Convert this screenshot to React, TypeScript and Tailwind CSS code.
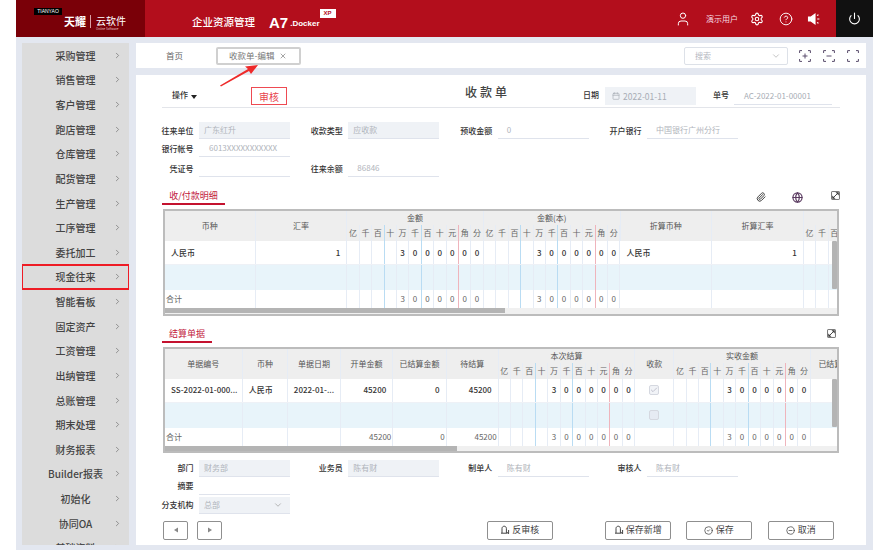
import React from "react";
import { ChevronRight, ChevronDown, User, Settings, CircleHelp, Power, Paperclip, Globe, CircleCheck, CircleMinus, Calendar, X, Check } from "lucide-react";

const MENU = ["采购管理","销售管理","客户管理","跑店管理","仓库管理","配货管理","生产管理","工序管理","委托加工","现金往来","智能看板","固定资产","工资管理","出纳管理","总账管理","期末处理","财务报表","Builder报表","初始化","协同OA","基础资料"];
const DIG = ["亿","千","百","十","万","千","百","十","元","角","分"];
const ROW = ["","","","","3","0","0","0","0","0","0"];
const EMPTY = ["","","","","","","","","","",""];

function sepClass(i: number) {
  if (i === 2 || i === 5) return "border-r-[1.5px] border-r-[#b9dcf3]";
  if (i === 8) return "border-r-[1.5px] border-r-[#efb4bc]";
  return "border-r border-r-[#e6ecf5]";
}

function Digits({ vals, light }: { vals: string[]; light?: boolean }) {
  return (
    <div className="flex h-full">
      {vals.map((v, i) => (
        <div key={i} className={`w-[12.42px] shrink-0 h-full flex items-center justify-center text-[8px] ${light ? "text-[#666]" : "font-medium text-[#333]"} ${sepClass(i)}`}>{v}</div>
      ))}
    </div>
  );
}

function DigitHead({ label }: { label: string }) {
  return (
    <div className="w-[136.62px] shrink-0 h-full flex flex-col border-r border-r-[#e6ecf5]">
      <div className="h-[14px] flex items-center justify-center text-[8px] text-[#555]">{label}</div>
      <div className="h-[16px] flex">
        {DIG.map((d, i) => (
          <div key={i} className={`w-[12.42px] shrink-0 h-full flex items-center justify-center text-[8px] text-[#666] ${sepClass(i)}`}>{d}</div>
        ))}
      </div>
    </div>
  );
}

type Col = { k: "t" | "d"; w: string; head: string; a?: string; r1?: string; r3?: string; check?: boolean };

function Cell({ col, v, light, row }: { col: Col; v?: string; light?: boolean; row: number }) {
  if (col.k === "d") {
    return <div className="w-[136.62px] shrink-0 h-full"><Digits vals={v === "" ? EMPTY : ROW} light={light} /></div>;
  }
  return (
    <div className={`${col.w} shrink-0 h-full flex items-center border-r border-r-[#e6ecf5] text-[8px] ${col.a === "r" ? "justify-end" : col.a === "c" ? "justify-center" : "justify-start"} ${light ? "text-[#666] px-[1px]" : "font-medium text-[#333] px-[6px]"}`}>
      {col.check && row === 0 && <span className="w-[10px] h-[10px] rounded-[2px] border border-[#d5d8e0] bg-[#f1f3f7] flex items-center justify-center"><Check size={8} className="text-[#aab]" /></span>}
      {col.check && row === 1 && <span className="w-[10px] h-[10px] rounded-[2px] border border-[#d5d8e0] bg-[#e6ebf3]" />}
      {!col.check && <span className="whitespace-nowrap">{v}</span>}
    </div>
  );
}

function Table({ cols, thumb, bar }: { cols: Col[]; thumb: string; bar: string }) {
  return (
    <div className="relative mx-[1px] w-[676px] border-2 border-[#bcbcbc] bg-[#f0f0f0] overflow-hidden">
      <div className="overflow-hidden">
        <div className="flex h-[30px] bg-[#eeeeee] w-[900px]">
          {cols.map((c, i) => c.k === "d"
            ? <DigitHead key={i} label={c.head} />
            : <div key={i} className={`${c.w} shrink-0 h-full flex items-center justify-center border-r border-r-[#e6ecf5] text-[8px] text-[#555] whitespace-nowrap overflow-hidden`}>{c.head}</div>)}
        </div>
        <div className="flex h-[24px] bg-white w-[900px] border-b border-b-[#eef1f6]">
          {cols.map((c, i) => <Cell key={i} col={c} v={c.k === "d" ? "x" : c.r1} row={0} />)}
        </div>
        <div className="flex h-[25px] bg-[#e8f4fa] w-[900px]">
          {cols.map((c, i) => <Cell key={i} col={c} v={""} row={1} />)}
        </div>
        <div className="flex h-[18px] bg-white w-[900px]">
          {cols.map((c, i) => <Cell key={i} col={c} v={c.k === "d" ? "x" : c.r3} light row={2} />)}
        </div>
      </div>
      <div className={`${bar} bg-[#f0f0f0]`}><div className={`h-[5px] bg-[#b4b4b4] ${thumb}`} /></div>
      <div className="absolute right-0 top-[30px] w-[5px] h-[48px] bg-[#b4b4b4] rounded-[1px]" />
    </div>
  );
}

const T1: Col[] = [
  { k: "t", w: "w-[90.7px]", head: "币种", r1: "人民币", r3: "合计" },
  { k: "t", w: "w-[91.6px]", head: "汇率", r1: "1", a: "r" },
  { k: "d", w: "", head: "金额" },
  { k: "d", w: "", head: "金额(本)" },
  { k: "t", w: "w-[91.7px]", head: "折算币种", r1: "人民币" },
  { k: "t", w: "w-[91.6px]", head: "折算汇率", r1: "1", a: "r" },
  { k: "d", w: "", head: "" },
];
const T2: Col[] = [
  { k: "t", w: "w-[77.7px]", head: "单据编号", r1: "SS-2022-01-000...", r3: "合计" },
  { k: "t", w: "w-[45.6px]", head: "币种", r1: "人民币" },
  { k: "t", w: "w-[52.4px]", head: "单据日期", r1: "2022-01-...", a: "c" },
  { k: "t", w: "w-[52.6px]", head: "开单金额", r1: "45200", r3: "45200", a: "r" },
  { k: "t", w: "w-[53.4px]", head: "已结算金额", r1: "0", r3: "0", a: "r" },
  { k: "t", w: "w-[52px]", head: "待结算", r1: "45200", r3: "45200", a: "r" },
  { k: "d", w: "", head: "本次结算" },
  { k: "t", w: "w-[39px]", head: "收款", check: true, a: "c" },
  { k: "d", w: "", head: "实收金额" },
  { k: "t", w: "w-[56px]", head: "已结算金额" },
];

function Field({ label, value, filled, chevron, pad }: { label: string; value?: string; filled?: boolean; chevron?: boolean; pad?: string }) {
  return (
    <div className="w-[149.33px] shrink-0 flex items-center">
      <div className="w-[49.5px] text-right text-[8px] font-medium text-[#333] whitespace-nowrap">{label}</div>
      <div className={`ml-[5.5px] w-[91px] h-[17px] flex items-center justify-between pr-[5px] border-b border-b-[#dfe3ec] text-[8px] text-[#b0b4bb] ${filled ? "bg-[#eff2f6] pl-[5px]" : pad ?? "pl-[9px]"}`}>
        <span className="whitespace-nowrap">{value}</span>
        {chevron && <ChevronDown size={10} className="text-[#aaa] mr-[2px]" />}
      </div>
    </div>
  );
}

function ExpandIcon() {
  return (
    <svg width="9" height="9" viewBox="0 0 10 10">
      <rect x="0.6" y="0.6" width="8.8" height="8.8" rx="0.6" fill="none" stroke="#666" strokeWidth="1" />
      <path d="M5 1.4H8.6V5ZM5 8.6H1.4V5Z" fill="#333" />
      <path d="M3 7L7 3" stroke="#333" strokeWidth="1" />
    </svg>
  );
}

function Corners({ mid }: { mid: "plus" | "minus" | "none" }) {
  return (
    <svg width="12" height="12" viewBox="0 0 12 12" fill="none" stroke="#5a4d6c" strokeWidth="1">
      <path d="M0.6 3V0.6H3M9 0.6H11.4V3M11.4 9V11.4H9M3 11.4H0.6V9" />
      {mid !== "none" && <path d="M3.5 6H8.5" />}
      {mid === "plus" && <path d="M6 3.5V8.5" />}
    </svg>
  );
}

function Btn({ children, w }: { children: React.ReactNode; w: string }) {
  return <button className={`${w} h-[19px] shrink-0 flex items-center justify-center gap-[2px] rounded-[2px] border border-[#8f8f8f] bg-white text-[9px] text-[#444]`}>{children}</button>;
}

function NoteIcon() {
  return (
    <svg width="10" height="10" viewBox="0 0 10 10" fill="none" stroke="#444" strokeWidth="1">
      <path d="M1 8.2H7.5M2 8V3.4C2 2.2 3 1.2 4.2 1.2C5.4 1.2 6.4 2.2 6.4 3.4V8M8.6 5V8.8M7.4 7.2L8.6 8.8" />
    </svg>
  );
}

function SpeakerIcon() {
  return (
    <svg width="14" height="14" viewBox="0 0 14 14" fill="none" stroke="white" strokeWidth="1.1">
      <path d="M1.5 5H4L8 2V12L4 9H1.5Z" fill="white" />
      <path d="M10 3.5L11.5 2.8M10.2 7H12.4M10 10.5L11.5 11.2" />
    </svg>
  );
}

export default function App() {
  return (
    <div className="relative w-[890px] h-[550px] bg-white overflow-hidden pl-[16px] pr-[17px] [font-family:'Noto_Sans_CJK_SC','Noto_Sans',sans-serif]">
      <div className="h-full bg-[#e3e7f0] flex flex-col">
        {/* Header */}
        <header className="h-[37px] shrink-0 flex bg-[#b30e1c] text-white">
          <div className="w-[129px] shrink-0 bg-[#7a0008] pl-[18px] pt-[8px]">
            <div className="w-[28px] h-[7px] bg-black text-[5px] leading-[7px] text-center text-white [font-family:'Liberation_Sans',sans-serif]">TIANYAO</div>
            <div className="flex items-start ml-[30px] leading-none">
              <span className="text-[11px] font-bold leading-[13px]">天耀</span>
              <span className="w-px h-[13px] bg-[#d9a0a5] ml-[4px] mr-[5px]" />
              <span className="flex flex-col items-start">
                <span className="text-[10px] leading-[12px]">云软件</span>
                <span className="text-[3px] leading-[4px] text-[#e8c8c8]">Online Software</span>
              </span>
            </div>
          </div>
          <div className="flex items-center pl-[47px] pt-[7px]">
            <span className="text-[10.5px] font-medium whitespace-nowrap">企业资源管理</span>
            <span className="ml-[14px] text-[15px] font-bold leading-none [font-family:'Liberation_Sans',sans-serif]">A7</span>
            <span className="ml-[2px] mt-[4px] text-[8px] font-bold leading-none [font-family:'Liberation_Sans',sans-serif]">.Docker</span>
            <span className="-mt-[17px] w-[16px] h-[9px] bg-white text-[#b30e1c] text-[6px] font-bold leading-[9px] text-center [font-family:'Liberation_Sans',sans-serif]">XP</span>
          </div>
          <div className="ml-auto flex items-center">
            <User size={16} strokeWidth={1.5} />
            <span className="ml-[15px] text-[8px] text-[#f6dce0] whitespace-nowrap">演示用户</span>
            <Settings size={14} strokeWidth={1.9} className="ml-[12px]" />
            <CircleHelp size={14} strokeWidth={1.6} className="ml-[15px]" />
            <span className="ml-[14px]"><SpeakerIcon /></span>
            <div className="ml-[15px] w-[37px] h-[37px] bg-[#111111] flex items-center justify-center">
              <Power size={13} strokeWidth={2} />
            </div>
          </div>
        </header>

        {/* Body */}
        <div className="flex-1 flex pt-[6px] pl-[6px] pr-[7px] pb-[5px] gap-[7px] min-h-0">
          <aside className="w-[107px] shrink-0 bg-[#dcdcdc] overflow-hidden">
            {MENU.map((m) => (
              <div key={m} className={`h-[24.63px] flex items-center relative ${m === "现金往来" ? "outline-2 -outline-offset-1 outline-[#ee1c25]" : ""}`}>
                <span className="w-[107px] text-center text-[10px] font-medium text-[#444] whitespace-nowrap">{m}</span>
                <ChevronRight size={9} className="absolute right-[7px] text-[#777]" />
              </div>
            ))}
          </aside>

          <main className="w-[730px] shrink-0 flex flex-col gap-[7px]">
            {/* Tab bar */}
            <div className="h-[25px] shrink-0 bg-white flex items-center pl-[30px] pr-[7px]">
              <span className="text-[8.5px] text-[#666]">首页</span>
              <div className="ml-[33px] w-[85px] h-[18px] rounded-[2px] border-2 border-[#d0d0d0] flex items-center pl-[11px] text-[8.5px] text-[#777] whitespace-nowrap">
                收款单-编辑<X size={8} className="ml-[5px] text-[#777]" />
              </div>
              <div className="ml-auto w-[104px] h-[18px] rounded-[2px] border border-[#dde1e8] flex items-center justify-between pl-[10px] pr-[6px] text-[8px] text-[#b5b8bf]">
                搜索<ChevronDown size={10} className="text-[#bbb]" />
              </div>
              <div className="ml-[11px] flex gap-[12px]">
                <Corners mid="plus" /><Corners mid="minus" /><Corners mid="none" />
              </div>
            </div>

            {/* Card */}
            <div className="flex-1 bg-white min-h-0 pt-[12px]">
              {/* Toolbar */}
              <div className="mx-[26px] h-[20.5px] border-b border-b-[#e3e5ea] flex items-start">
                <span className="ml-[10px] mt-[2px] text-[8px] font-medium text-[#333] whitespace-nowrap">操作</span>
                <svg width="6" height="4" viewBox="0 0 6 4" className="ml-[3px] mt-[8px]"><path d="M0 0H6L3 4Z" fill="#222" /></svg>
                <span className="ml-[54px] w-[36px] h-[18px] border border-[#ee4a52] text-[#e8434c] text-[10px] flex items-center justify-center">审核</span>
                <span className="ml-[178px] -mt-[4px] text-[12px] tracking-[3px] font-medium text-[#444] whitespace-nowrap">收款单</span>
                <span className="ml-[73px] mt-[2px] text-[8px] font-medium text-[#333] whitespace-nowrap">日期</span>
                <div className="ml-[6px] w-[91px] h-[18px] bg-[#eff2f6] flex items-center pl-[7px] gap-[3px] text-[8.5px] text-[#a8adb5] whitespace-nowrap"><Calendar size={8} />2022-01-11</div>
                <span className="ml-[17px] mt-[2px] text-[8px] font-medium text-[#333] whitespace-nowrap">单号</span>
                <div className="ml-[5px] w-[98px] h-[18px] border-b border-b-[#dfe3ec] flex items-center pl-[10px] text-[8px] text-[#a8adb5] whitespace-nowrap">AC-2022-01-00001</div>
              </div>

              {/* Form */}
              <div className="pl-[8px] mt-[14.5px] flex"><Field label="往来单位" value="广东红升" filled /><Field label="收款类型" value="应收款" filled /><Field label="预收金额" value="0" /><Field label="开户银行" value="中国银行广州分行" /></div>
              <div className="pl-[8px] mt-[1px] flex"><Field label="银行帐号" value="6013XXXXXXXXXXX" pad="pl-[10px]" /></div>
              <div className="pl-[8px] mt-[3px] flex"><Field label="凭证号" /><Field label="往来余额" value="86846" /></div>

              {/* Section 1 */}
              <div className="mx-[26px] mt-[11.5px] h-[16.5px] flex items-start">
                <div className="w-[63px] h-[16.5px] border-b-2 border-b-[#c4122f] text-center text-[9px] text-[#c2183c] whitespace-nowrap leading-[14px]">收/付款明细</div>
                <Paperclip size={10} strokeWidth={2.4} className="ml-[531px] mt-[3px] text-[#444]" />
                <Globe size={11} strokeWidth={2.6} className="ml-[26px] mt-[3px] text-[#5a3a60]" />
                <span className="ml-[28px] mt-[2px]"><ExpandIcon /></span>
              </div>
              <div className="mx-[26px] mt-[4px]">
                <Table cols={T1} thumb="w-[340px]" bar="h-[6px]" />
              </div>

              {/* Section 2 */}
              <div className="mx-[26px] mt-[10.5px] h-[16.5px] flex items-start">
                <div className="w-[50px] h-[16.5px] border-b-2 border-b-[#c4122f] text-center text-[9px] text-[#c2183c] whitespace-nowrap leading-[14px]">结算单据</div>
                <span className="ml-[615px] mt-[2px]"><ExpandIcon /></span>
              </div>
              <div className="mx-[26px] mt-[3.5px]">
                <Table cols={T2} thumb="w-[292px]" bar="h-[5px]" />
              </div>

              {/* Bottom form */}
              <div className="pl-[8px] mt-[7px] flex"><Field label="部门" value="财务部" filled /><Field label="业务员" value="陈有财" filled /><Field label="制单人" value="陈有财" /><Field label="审核人" value="陈有财" /></div>
              <div className="pl-[8px] mt-[1px] flex"><Field label="摘要" /></div>
              <div className="pl-[8px] mt-[2px] flex"><Field label="分支机构" value="总部" filled chevron /></div>

              {/* Buttons */}
              <div className="mx-[26px] mt-[7px] flex">
                <Btn w="w-[25px] ml-[1px]"><svg width="6" height="6" viewBox="0 0 6 6"><path d="M5 0.5V5.5L1 3Z" fill="#888" /></svg></Btn>
                <Btn w="w-[25px] ml-[9px]"><svg width="6" height="6" viewBox="0 0 6 6"><path d="M1 0.5V5.5L5 3Z" fill="#888" /></svg></Btn>
                <Btn w="w-[65.6px] ml-[265px]"><NoteIcon />反审核</Btn>
                <Btn w="w-[65.6px] ml-[52.4px]"><NoteIcon />保存新增</Btn>
                <Btn w="w-[65.6px] ml-[15.4px]"><CircleCheck size={9} className="mr-[1px]" />保存</Btn>
                <Btn w="w-[65.6px] ml-[16.4px]"><CircleMinus size={9} className="mr-[1px]" />取消</Btn>
              </div>
            </div>
          </main>
        </div>
      </div>
      {/* Annotation arrow over the tab */}
      <svg className="absolute left-[218px] top-[62px]" width="44" height="26" viewBox="0 0 44 26">
        <path d="M2 23.5L30 7L27 4.5L40 3L33 12L31 9L3 24.5Z" fill="#ee2a2a" />
      </svg>
    </div>
  );
}
